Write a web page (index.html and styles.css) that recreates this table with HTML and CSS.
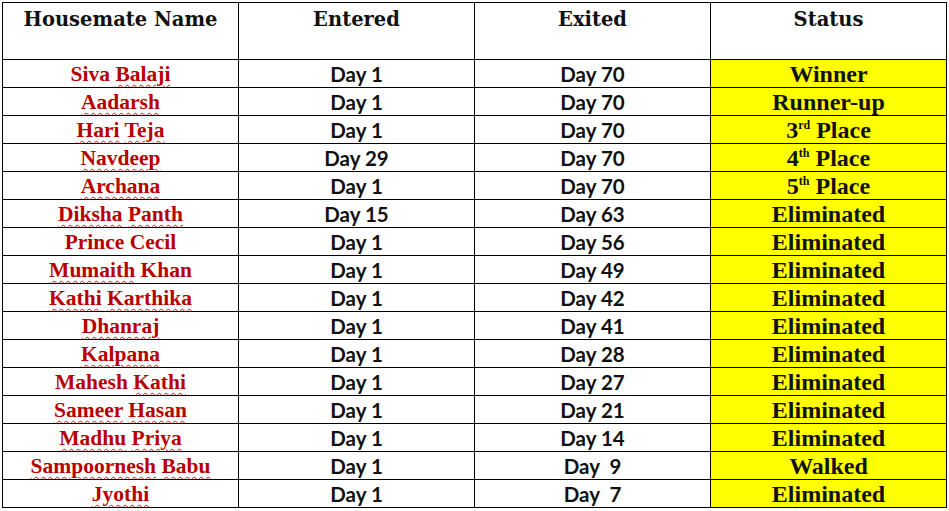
FILE: index.html
```html
<!DOCTYPE html>
<html>
<head>
<meta charset="utf-8">
<link rel="stylesheet" href="styles.css">
</head>
<body>
<table class="tbl">
  <colgroup><col class="c"><col class="c"><col class="c"><col class="c"></colgroup>
  <thead>
    <tr class="head"><th>Housemate Name</th><th>Entered</th><th>Exited</th><th>Status</th></tr>
  </thead>
  <tbody>
    <tr><td class="name">Siva <u>Balaji</u></td><td class="day">Day 1</td><td class="day">Day 70</td><td class="status">Winner</td></tr>
    <tr><td class="name"><u>Aadarsh</u></td><td class="day">Day 1</td><td class="day">Day 70</td><td class="status">Runner-up</td></tr>
    <tr><td class="name"><u>Hari</u> <u>Teja</u></td><td class="day">Day 1</td><td class="day">Day 70</td><td class="status">3<sup>rd</sup> Place</td></tr>
    <tr><td class="name"><u>Navdeep</u></td><td class="day">Day 29</td><td class="day">Day 70</td><td class="status">4<sup>th</sup> Place</td></tr>
    <tr><td class="name"><u>Archana</u></td><td class="day">Day 1</td><td class="day">Day 70</td><td class="status">5<sup>th</sup> Place</td></tr>
    <tr><td class="name"><u>Diksha</u> <u>Panth</u></td><td class="day">Day 15</td><td class="day">Day 63</td><td class="status">Eliminated</td></tr>
    <tr><td class="name">Prince Cecil</td><td class="day">Day 1</td><td class="day">Day 56</td><td class="status">Eliminated</td></tr>
    <tr><td class="name"><u>Mumaith</u> Khan</td><td class="day">Day 1</td><td class="day">Day 49</td><td class="status">Eliminated</td></tr>
    <tr><td class="name"><u>Kathi</u> <u>Karthika</u></td><td class="day">Day 1</td><td class="day">Day 42</td><td class="status">Eliminated</td></tr>
    <tr><td class="name"><u>Dhanraj</u></td><td class="day">Day 1</td><td class="day">Day 41</td><td class="status">Eliminated</td></tr>
    <tr><td class="name"><u>Kalpana</u></td><td class="day">Day 1</td><td class="day">Day 28</td><td class="status">Eliminated</td></tr>
    <tr><td class="name">Mahesh <u>Kathi</u></td><td class="day">Day 1</td><td class="day">Day 27</td><td class="status">Eliminated</td></tr>
    <tr><td class="name"><u>Sameer</u> <u>Hasan</u></td><td class="day">Day 1</td><td class="day">Day 21</td><td class="status">Eliminated</td></tr>
    <tr><td class="name"><u>Madhu</u> <u>Priya</u></td><td class="day">Day 1</td><td class="day">Day 14</td><td class="status">Eliminated</td></tr>
    <tr><td class="name"><u>Sampoornesh</u> <u>Babu</u></td><td class="day">Day 1</td><td class="day">Day&nbsp; 9</td><td class="status">Walked</td></tr>
    <tr><td class="name"><u>Jyothi</u></td><td class="day">Day 1</td><td class="day">Day&nbsp; 7</td><td class="status">Eliminated</td></tr>
  </tbody>
</table>
</body>
</html>
```
FILE: styles.css
```css
html, body {
  margin: 0;
  padding: 0;
  background: #ffffff;
}
.tbl {
  margin: 2px 0 0 2px;
  border-collapse: collapse;
  table-layout: fixed;
  width: 945px;
}
.c { width: 236px; }
.tbl th, .tbl td {
  border: 1px solid #000;
  padding: 0;
  text-align: center;
  overflow: hidden;
  white-space: nowrap;
}
.head th {
  height: 54px;
  vertical-align: top;
  padding-top: 2px;
  font-family: "DejaVu Serif", serif;
  font-weight: bold;
  font-size: 19.5px;
  line-height: 30px;
  color: #111;
}
.tbl td {
  height: 27px;
  vertical-align: middle;
  line-height: 26px;
}
.name {
  font-family: "Liberation Serif", serif;
  font-weight: bold;
  font-size: 21.5px;
  color: #b80000;
}
.name u {
  text-decoration: underline wavy #e01010;
  text-decoration-thickness: 1px;
  text-underline-offset: 3px;
}
.day {
  font-family: Lato, "Liberation Sans", sans-serif;
  font-weight: bold;
  font-size: 20.5px;
  color: #111;
}
.status {
  background: #ffff00;
  font-family: "Liberation Serif", serif;
  font-weight: bold;
  font-size: 24px;
  color: #111;
}
.status sup {
  font-size: 12px;
  line-height: 0;
  vertical-align: 9px;
}
```
